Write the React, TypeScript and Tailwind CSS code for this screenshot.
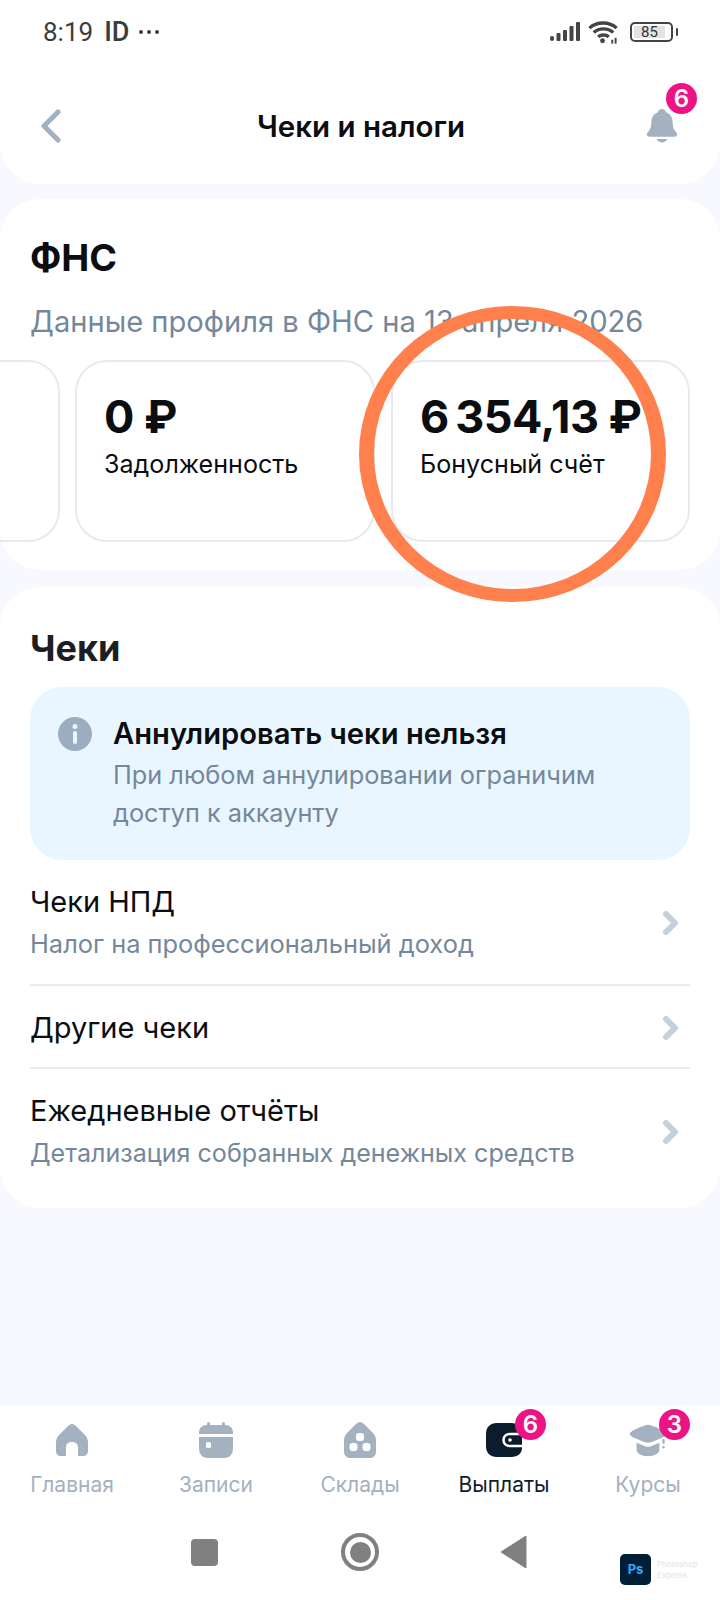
const ink = "text-[#0b0d10]";

function Badge({ value, className }: { value: string; className: string }) {
  return (
    <span
      className={`absolute flex h-[31px] w-[31px] items-center justify-center rounded-full bg-[#ee1384] font-['Inter',sans-serif] text-[24px] font-semibold leading-none text-white ${className}`}
    >
      {value}
    </span>
  );
}

function StatusBar() {
  return (
    <div className="flex h-[62px] items-end justify-between pl-[43px] pr-[42px] pb-[15px]">
      <div className="flex h-[30px] items-center text-[#3c3c3c]">
        <span className="font-['Roboto',sans-serif] text-[26px] leading-[30px]">8:19</span>
        <span className="ml-[11px] font-['Roboto',sans-serif] text-[27px] font-medium leading-[30px]">ID</span>
        <div className="ml-[10px] flex gap-[4px]">
          <div className="h-[4px] w-[4px] rounded-full bg-[#3c3c3c]" />
          <div className="h-[4px] w-[4px] rounded-full bg-[#3c3c3c]" />
          <div className="h-[4px] w-[4px] rounded-full bg-[#3c3c3c]" />
        </div>
      </div>
      <div className="flex h-[30px] items-center">
        <svg width="30" height="20" viewBox="0 0 30 20" fill="#444">
          <rect x="0" y="14" width="4" height="5" rx="2" />
          <rect x="6.500" y="11" width="4" height="8" rx="1" />
          <rect x="13" y="8" width="4" height="11" rx="1" />
          <rect x="19.500" y="4" width="4" height="15" rx="1" />
          <rect x="26" y="0" width="4" height="19" rx="1" />
        </svg>
        <svg className="ml-[8px]" width="31" height="24" viewBox="0 0 32 24" fill="none" stroke="#444" strokeWidth="3.500">
          <path d="M1.500 8C9 1 22 1 29.500 8" />
          <path d="M6 12.500c5.500-5 14.500-5 20 0" />
          <path d="M10.500 17c3-2.500 8-2.500 11 0" />
          <circle cx="15" cy="21" r="2.500" fill="#444" stroke="none" />
          <rect x="24" y="20" width="2" height="4" fill="#444" stroke="none" />
          <rect x="27.500" y="18" width="2" height="6" fill="#444" stroke="none" />
        </svg>
        <div className="ml-[11px] flex items-center gap-[3px]">
          <div className="flex h-[20px] w-[43px] items-center rounded-[5px] border-2 border-[#444] p-[2px]">
            <div className="flex h-full w-[31px] items-center justify-center bg-[#e3e3e3] font-['Roboto',sans-serif] text-[15px] leading-none text-[#333]">
              85
            </div>
          </div>
          <div className="h-[8px] w-[2px] rounded-full bg-[#444]" />
        </div>
      </div>
    </div>
  );
}

function Header() {
  return (
    <header className="h-[184px] shrink-0 rounded-b-[40px] bg-white">
      <StatusBar />
      <div className="flex h-[122px] items-center justify-between pl-[40px] pr-[42px] pt-[6px]">
        <svg width="22" height="34" viewBox="0 0 22 34" fill="none" stroke="#a3b1c0" strokeWidth="5" strokeLinecap="round" strokeLinejoin="round">
          <path d="M18 3 4 17l14 14" />
        </svg>
        <h1 className={`ml-[14px] font-['Inter',sans-serif] text-[29.500px] font-semibold leading-[34px] ${ink}`}>Чеки и налоги</h1>
        <div className="relative h-[36px] w-[32px]">
          <svg width="32" height="36" viewBox="0 0 36 38" fill="#a3b1c0">
            <path d="M18 0c2.500 0 4 1.500 4.500 3.500C28 5.500 30 10 30 15c0 5 1 8 4 11 2 2 1 5-2 5H4c-3 0-4-3-2-5 3-3 4-6 4-11 0-5 2-9.500 7.500-11.500C14 1.500 15.500 0 18 0Z" />
            <path d="M12 33.500h12c-1 2.500-3.500 4-6 4s-5-1.500-6-4Z" />
          </svg>
          <Badge value="6" className="-right-[19px] -top-[25px]" />
        </div>
      </div>
    </header>
  );
}

function Tile({ amount, label, className }: { amount: string; label: string; className: string }) {
  return (
    <div className={`h-[182px] shrink-0 rounded-[32px] border-2 border-[#e6eaf0] pl-[27px] pt-[30px] ${className}`}>
      <div className={`font-['Inter',sans-serif] text-[45px] font-bold leading-[50px] tracking-[-0.5px] whitespace-nowrap ${ink}`}>{amount}</div>
      <div className={`mt-[6px] font-['Inter',sans-serif] text-[25.100px] leading-[32px] whitespace-nowrap ${ink}`}>{label}</div>
    </div>
  );
}

function Row({ title, sub, subClass = "text-[25.400px]" }: { title: string; sub?: string; subClass?: string }) {
  return (
    <div className="flex items-center justify-between pr-[10px]">
      <div>
        <div className={`font-['Inter',sans-serif] text-[29px] leading-[36px] ${ink}`}>{title}</div>
        {sub ? <div className={`mt-[6px] font-['Inter',sans-serif] leading-[36px] text-[#75879a] ${subClass}`}>{sub}</div> : null}
      </div>
      <svg width="18" height="26" viewBox="0 0 18 26" fill="none" stroke="#c4d0dd" strokeWidth="6" strokeLinecap="round" strokeLinejoin="round">
        <path d="m4 4 9 9-9 9" />
      </svg>
    </div>
  );
}

function NavItem({ label, active, badge, children }: { label: string; active?: boolean; badge?: string; children: React.ReactNode }) {
  return (
    <div className="flex w-[144px] flex-col items-center">
      <div className="relative flex h-[36px] w-[40px] items-center justify-center">
        {children}
        {badge ? <Badge value={badge} className="-right-[22px] -top-[13px]" /> : null}
      </div>
      <div className={`mt-[13px] font-['Inter',sans-serif] text-[21px] leading-[28px] ${active ? "text-[#0f1d2c]" : "text-[#a3b1c0]"}`}>{label}</div>
    </div>
  );
}

export default function App() {
  return (
    <div className="relative flex h-[1600px] w-[720px] flex-col overflow-hidden bg-[#f7f9fe]">
      <Header />

      <section className="mt-[15px] h-[371px] shrink-0 rounded-[40px] bg-white pt-[37px]">
        <h2 className={`pl-[30px] font-['Inter',sans-serif] text-[37.500px] font-bold leading-[44px] ${ink}`}>ФНС</h2>
        <p className="mt-[24px] pl-[30px] font-['Inter',sans-serif] text-[29.150px] leading-[36px] whitespace-nowrap text-[#75879a]">
          Данные профиля в ФНС на 13 апреля 2026
        </p>
        <div className="mt-[20px] flex overflow-hidden">
          <div className="-ml-[238px] h-[182px] w-[298px] shrink-0 rounded-[32px] border-2 border-[#e6eaf0]" />
          <Tile amount="0 ₽" label="Задолженность" className="ml-[15px] w-[300px]" />
          <Tile amount={"6\u2009354,13 ₽"} label="Бонусный счёт" className="ml-[16px] w-[299px]" />
        </div>
      </section>

      <section className="mt-[17px] h-[621px] shrink-0 rounded-[40px] bg-white px-[30px] pt-[39px]">
        <h2 className="font-['Inter',sans-serif] text-[36px] font-bold leading-[44px] text-[#1c1e21]">Чеки</h2>
        <div className="mt-[17px] flex h-[173px] gap-[20px] rounded-[32px] bg-[#e9f6ff] pl-[27px] pt-[29px]">
          <svg className="shrink-0" width="36" height="36" viewBox="0 0 36 36">
            <circle cx="18" cy="18" r="17" fill="#9badc1" />
            <circle cx="18" cy="10.500" r="2.500" fill="#e9f6ff" />
            <rect x="16" y="15" width="4" height="13" rx="2" fill="#e9f6ff" />
          </svg>
          <div>
            <div className={`font-['Inter',sans-serif] text-[29.200px] font-semibold leading-[36px] ${ink}`}>Аннулировать чеки нельзя</div>
            <div className="mt-[4px] font-['Inter',sans-serif] text-[25.300px] leading-[38px] text-[#75879a]">
              При любом аннулировании ограничим
              <br />
              доступ к аккаунту
            </div>
          </div>
        </div>
        <div className="mt-[24px]">
          <Row title="Чеки НПД" sub="Налог на профессиональный доход" />
        </div>
        <div className="mt-[22px] h-[2px] bg-[#e9edf3]" />
        <div className="mt-[24px]">
          <Row title="Другие чеки" />
        </div>
        <div className="mt-[21px] h-[2px] bg-[#e9edf3]" />
        <div className="mt-[24px]">
          <Row title="Ежедневные отчёты" sub="Детализация собранных денежных средств" subClass="text-[25.100px]" />
        </div>
      </section>

      <div className="flex-1" />

      <nav className="flex h-[194px] shrink-0 flex-col bg-white pt-[16px]">
        <div className="flex">
          <NavItem label="Главная">
            <svg width="34" height="34" viewBox="0 0 34 34" fill="#a3b1c0">
              <path d="M17 1c1.500 0 3 1 5 3l7 7c3 3 4 5 4 9v8c0 3-2 5-5 5h-5v-9c0-3-2.500-5-6-5s-6 2-6 5v9H6c-3 0-5-2-5-5v-8c0-4 1-6 4-9l7-7c2-2 3.500-3 5-3Z" />
            </svg>
          </NavItem>
          <NavItem label="Записи">
            <svg width="36" height="36" viewBox="0 0 36 36" fill="#a3b1c0">
              <rect x="9" y="0" width="3" height="6" rx="1.500" />
              <rect x="24" y="0" width="3" height="6" rx="1.500" />
              <path d="M1 11c0-5 3-8 8-8h18c5 0 8 3 8 8v1H1v-1Z" />
              <path d="M1 15h34v11c0 6-3 10-9 10H10c-6 0-9-4-9-10V15Z" />
              <rect x="8" y="20" width="5" height="6" rx="1.500" fill="#fff" />
            </svg>
          </NavItem>
          <NavItem label="Склады">
            <svg width="34" height="36" viewBox="0 0 34 36" fill="#a3b1c0">
              <path d="M17 0c1.500 0 3 1 5 3l7 7c3 3 4 5 4 9v10c0 4-2 7-6 7H7c-4 0-6-3-6-7V19c0-4 1-6 4-9l7-7c2-2 3.500-3 5-3Z" />
              <rect x="13" y="11" width="8" height="8" rx="3" fill="#fff" />
              <rect x="6.500" y="21" width="8" height="8" rx="3" fill="#fff" />
              <rect x="19.500" y="21" width="8" height="8" rx="3" fill="#fff" />
            </svg>
          </NavItem>
          <NavItem label="Выплаты" active badge="6">
            <svg width="36" height="34" viewBox="0 0 36 34">
              <path d="M11 0h14c7 0 11 4 11 9v16c0 5-4 9-11 9H11C4 34 0 30 0 23V11C0 4 4 0 11 0Z" fill="#0b1c2c" />
              <path d="M36 11H24c-4 0-6.500 2.500-6.500 6s2.500 6 6.500 6h12" fill="none" stroke="#fff" strokeWidth="2.500" />
              <circle cx="24" cy="17" r="1.800" fill="#fff" />
            </svg>
          </NavItem>
          <NavItem label="Курсы" badge="3">
            <svg width="42" height="34" viewBox="0 0 42 34" fill="#a3b1c0">
              <path d="M21 1c3 0 18 6 19 9 .5 2-1 3-3 4l-12 5c-3 1-5 1-8 0L5 14c-2-1-3.500-2-3-4C3 7 18 1 21 1Z" />
              <path d="M9 20l9 3.500c2 .7 4 .7 6 0l9-3.500v7c0 4-5 7-12 7S9 31 9 27v-7Z" />
              <rect x="36" y="16" width="2.500" height="5" rx="1" />
              <rect x="36" y="23" width="2.500" height="3" rx="1" />
            </svg>
          </NavItem>
        </div>
        <div className="mt-[28px] flex h-[50px] items-center pl-[191px]">
          <div className="h-[27px] w-[27px] rounded-[4px] bg-[#808080]" />
          <div className="ml-[123px] flex h-[38px] w-[38px] items-center justify-center rounded-full border-[4px] border-[#808080]">
            <div className="h-[21px] w-[21px] rounded-full bg-[#808080]" />
          </div>
          <svg className="ml-[121px]" width="27" height="34" viewBox="0 0 27 34" fill="#808080">
            <path d="M26 1v32L1 17 26 1Z" stroke="#808080" strokeLinejoin="round" />
          </svg>
        </div>
      </nav>

      <div className="absolute left-[359px] top-[306px] h-[296px] w-[307px] rounded-[50%] border-x-[15px] border-y-[13px] border-[#ff7f4d]" />

      <div className="absolute left-[620px] top-[1554px] flex items-center gap-[6px]">
        <div className="flex h-[31px] w-[31px] items-center justify-center rounded-[5px] bg-[#001e36] font-['Inter',sans-serif] text-[13px] font-bold text-[#31a8ff]">
          Ps
        </div>
        <div className="font-['Inter',sans-serif] text-[8px] leading-[11px] text-[#e4e4e4]">
          Photoshop
          <br />
          Express
        </div>
      </div>
    </div>
  );
}
